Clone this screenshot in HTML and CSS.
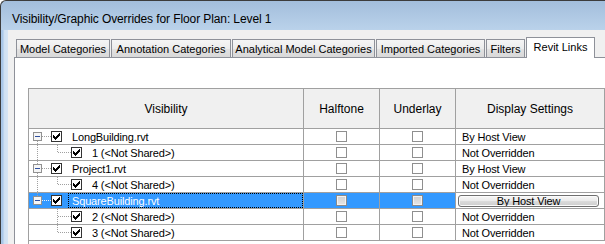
FILE: index.html
```html
<!DOCTYPE html>
<html lang="en">
<head>
  <meta charset="UTF-8" />
  <title>Visibility/Graphic Overrides for Floor Plan: Level 1</title>
  <link rel="stylesheet" href="styles.css">
</head>
<body>

  <div class="window">
    <div class="titlebar">Visibility/Graphic Overrides for Floor Plan: Level 1</div>

    <div class="frame">
      <div class="frame-edge"></div>

      <div class="client">
        <div class="tabs">
          <div class="tab tab-model">Model Categories</div>
          <div class="tab tab-annotation">Annotation Categories</div>
          <div class="tab tab-analytical">Analytical Model Categories</div>
          <div class="tab tab-imported">Imported Categories</div>
          <div class="tab tab-filters">Filters</div>
          <div class="tab tab-links active">Revit Links</div>
        </div>

        <div class="panel">
          <div class="grid">
            <div class="row head">
              <div class="cell">Visibility</div>
              <div class="cell">Halftone</div>
              <div class="cell">Underlay</div>
              <div class="cell">Display Settings</div>
            </div>

            <!-- LongBuilding.rvt -->
            <div class="row">
              <div class="cell vis">
                <svg class="tree" width="22" height="15">
                  <line class="dots" x1="8.5" y1="12" x2="8.5" y2="15" />
                  <line class="dots" x1="13" y1="7.5" x2="22" y2="7.5" />
                  <rect class="expander" x="4.5" y="3.5" width="8" height="8" />
                  <rect class="minus" x="6" y="7" width="5" height="1" />
                </svg>
                <span class="box on"><svg width="7" height="7"><path d="M6 0h1v1h-1zM5 1h2v1h-2zM0 2h1v1h-1zM4 2h3v1h-3zM0 3h2v1h-2zM3 3h3v1h-3zM0 4h5v1h-5zM1 5h3v1h-3zM2 6h1v1h-1z" /></svg></span>
                <span class="label">LongBuilding.rvt</span>
              </div>
              <div class="cell mid"><span class="box"></span></div>
              <div class="cell mid"><span class="box"></span></div>
              <div class="cell disp">By Host View</div>
            </div>

            <div class="row">
              <div class="cell vis">
                <svg class="tree" width="42" height="15">
                  <line class="dots" x1="8.5" y1="0" x2="8.5" y2="15" />
                  <line class="dots" x1="28.5" y1="0" x2="28.5" y2="8" />
                  <line class="dots" x1="29" y1="7.5" x2="42" y2="7.5" />
                </svg>
                <span class="box on"><svg width="7" height="7"><path d="M6 0h1v1h-1zM5 1h2v1h-2zM0 2h1v1h-1zM4 2h3v1h-3zM0 3h2v1h-2zM3 3h3v1h-3zM0 4h5v1h-5zM1 5h3v1h-3zM2 6h1v1h-1z" /></svg></span>
                <span class="label">1 (&lt;Not Shared&gt;)</span>
              </div>
              <div class="cell mid"><span class="box"></span></div>
              <div class="cell mid"><span class="box"></span></div>
              <div class="cell disp">Not Overridden</div>
            </div>

            <!-- Project1.rvt -->
            <div class="row">
              <div class="cell vis">
                <svg class="tree" width="22" height="15">
                  <line class="dots" x1="8.5" y1="0" x2="8.5" y2="3" />
                  <line class="dots" x1="8.5" y1="12" x2="8.5" y2="15" />
                  <line class="dots" x1="13" y1="7.5" x2="22" y2="7.5" />
                  <rect class="expander" x="4.5" y="3.5" width="8" height="8" />
                  <rect class="minus" x="6" y="7" width="5" height="1" />
                </svg>
                <span class="box on"><svg width="7" height="7"><path d="M6 0h1v1h-1zM5 1h2v1h-2zM0 2h1v1h-1zM4 2h3v1h-3zM0 3h2v1h-2zM3 3h3v1h-3zM0 4h5v1h-5zM1 5h3v1h-3zM2 6h1v1h-1z" /></svg></span>
                <span class="label">Project1.rvt</span>
              </div>
              <div class="cell mid"><span class="box"></span></div>
              <div class="cell mid"><span class="box"></span></div>
              <div class="cell disp">By Host View</div>
            </div>

            <div class="row">
              <div class="cell vis">
                <svg class="tree" width="42" height="15">
                  <line class="dots" x1="8.5" y1="0" x2="8.5" y2="15" />
                  <line class="dots" x1="28.5" y1="0" x2="28.5" y2="8" />
                  <line class="dots" x1="29" y1="7.5" x2="42" y2="7.5" />
                </svg>
                <span class="box on"><svg width="7" height="7"><path d="M6 0h1v1h-1zM5 1h2v1h-2zM0 2h1v1h-1zM4 2h3v1h-3zM0 3h2v1h-2zM3 3h3v1h-3zM0 4h5v1h-5zM1 5h3v1h-3zM2 6h1v1h-1z" /></svg></span>
                <span class="label">4 (&lt;Not Shared&gt;)</span>
              </div>
              <div class="cell mid"><span class="box"></span></div>
              <div class="cell mid"><span class="box"></span></div>
              <div class="cell disp">Not Overridden</div>
            </div>

            <!-- SquareBuilding.rvt (selected) -->
            <div class="row selected">
              <div class="cell vis">
                <svg class="tree" width="22" height="15">
                  <line class="dots" x1="8.5" y1="0" x2="8.5" y2="3" />
                  <line class="dots light" x1="13" y1="7.5" x2="22" y2="7.5" />
                  <rect class="expander" x="4.5" y="3.5" width="8" height="8" />
                  <rect class="minus" x="6" y="7" width="5" height="1" />
                </svg>
                <span class="box on"><svg width="7" height="7"><path d="M6 0h1v1h-1zM5 1h2v1h-2zM0 2h1v1h-1zM4 2h3v1h-3zM0 3h2v1h-2zM3 3h3v1h-3zM0 4h5v1h-5zM1 5h3v1h-3zM2 6h1v1h-1z" /></svg></span>
                <span class="label">SquareBuilding.rvt</span>
              </div>
              <div class="cell mid"><span class="box off"></span></div>
              <div class="cell mid"><span class="box off"></span></div>
              <div class="cell disp"><span class="button">By Host View</span></div>
            </div>

            <div class="row">
              <div class="cell vis">
                <svg class="tree" width="42" height="15">
                  <line class="dots" x1="28.5" y1="0" x2="28.5" y2="15" />
                  <line class="dots" x1="29" y1="7.5" x2="42" y2="7.5" />
                </svg>
                <span class="box on"><svg width="7" height="7"><path d="M6 0h1v1h-1zM5 1h2v1h-2zM0 2h1v1h-1zM4 2h3v1h-3zM0 3h2v1h-2zM3 3h3v1h-3zM0 4h5v1h-5zM1 5h3v1h-3zM2 6h1v1h-1z" /></svg></span>
                <span class="label">2 (&lt;Not Shared&gt;)</span>
              </div>
              <div class="cell mid"><span class="box"></span></div>
              <div class="cell mid"><span class="box"></span></div>
              <div class="cell disp">Not Overridden</div>
            </div>

            <div class="row">
              <div class="cell vis">
                <svg class="tree" width="42" height="15">
                  <line class="dots" x1="28.5" y1="0" x2="28.5" y2="8" />
                  <line class="dots" x1="29" y1="7.5" x2="42" y2="7.5" />
                </svg>
                <span class="box on"><svg width="7" height="7"><path d="M6 0h1v1h-1zM5 1h2v1h-2zM0 2h1v1h-1zM4 2h3v1h-3zM0 3h2v1h-2zM3 3h3v1h-3zM0 4h5v1h-5zM1 5h3v1h-3zM2 6h1v1h-1z" /></svg></span>
                <span class="label">3 (&lt;Not Shared&gt;)</span>
              </div>
              <div class="cell mid"><span class="box"></span></div>
              <div class="cell mid"><span class="box"></span></div>
              <div class="cell disp">Not Overridden</div>
            </div>
          </div>
        </div>
      </div>
    </div>
  </div>

</body>
</html>
```

FILE: styles.css
```css
* {
  box-sizing: border-box;
  margin: 0;
  padding: 0;
}

body {
  background: #fff;
  overflow: hidden;
  font-family: 'Liberation Sans', Arial, sans-serif;
  font-size: 11px;
  color: #000;
}

.window {
  width: 605px;
  height: 244px;
  overflow: hidden;
  border-top: 1px solid #3c3c3c;
  border-left: 1px solid #3c3c3c;
  border-top-left-radius: 6px;
  background: linear-gradient(#a3bedc, #bad2ea 29px);
  display: flex;
  flex-direction: column;
}

.titlebar {
  flex: none;
  height: 29px;
  padding: 11px 0 0 11px;
  font-size: 12px;
  line-height: 14px;
  letter-spacing: -0.1px;
}

.frame {
  flex: 1;
  display: flex;
  min-height: 0;
}

.frame-edge {
  width: 7px;
  background: linear-gradient(to right, #a9c7e8 0, #a9c7e8 2px, #cfe0f2 3px, #d6e5f4);
}

.client {
  flex: 1;
  min-width: 0;
  background: #f0f0f0;
  display: flex;
  flex-direction: column;
}

/* tab strip */
.tabs {
  flex: none;
  height: 27px;
  padding-left: 8px;
  display: flex;
  align-items: flex-end;
  gap: 1px;
}

.tab {
  flex: none;
  height: 18px;
  padding-top: 2px;
  line-height: 15px;
  text-align: center;
  white-space: nowrap;
  border: 1px solid #8e9199;
  border-bottom: none;
  background: linear-gradient(#f5f5f5, #ececec 50%, #e2e2e2 51%, #d9d9d9);
}

.tab-model { width: 94px; }
.tab-annotation { width: 120px; }
.tab-analytical { width: 143px; }
.tab-imported { width: 109px; }
.tab-filters { width: 39px; }

.tab.active {
  width: 69px;
  height: 21px;
  margin-bottom: -1px;
  background: #fff;
  position: relative;
  z-index: 1;
}

/* tab page */
.panel {
  flex: 1;
  min-height: 0;
  margin-left: 6px;
  padding: 30px 0 0 13px;
  background: #fff;
  border-top: 1px solid #8e9199;
  border-left: 1px solid #8e9199;
  display: flex;
  flex-direction: column;
  overflow: hidden;
}

.grid {
  flex: 1;
  border-top: 1px solid #a0a0a0;
  border-left: 1px solid #a0a0a0;
}

.row {
  display: grid;
  grid-template-columns: 275px 76px 76px 149px;
  height: 16px;
  letter-spacing: -0.15px;
}

.cell {
  display: flex;
  align-items: center;
  border-right: 1px solid #a0a0a0;
  border-bottom: 1px solid #a0a0a0;
  white-space: nowrap;
  overflow: hidden;
}

.row.head {
  height: 40px;
  letter-spacing: 0;
}

.head .cell {
  justify-content: center;
  background: #f0f0f0;
  font-size: 12px;
}

.mid {
  justify-content: center;
}

.disp {
  padding-left: 6px;
}

/* tree column */
.tree {
  display: block;
  flex: none;
  shape-rendering: crispEdges;
}

.dots {
  stroke: #a0a0a0;
  stroke-width: 1;
  stroke-dasharray: 1 1;
}

.dots.light {
  stroke: #e8f2ff;
}

.expander {
  fill: #f6f6f6;
  stroke: #919191;
}

.minus {
  fill: #2e4f9e;
}

.box {
  width: 11px;
  height: 11px;
  flex: none;
  border: 1px solid #8f8f8f;
  background: #fff;
  display: flex;
  align-items: center;
  justify-content: center;
}

.box.on {
  border-color: #333;
}

.box.on svg {
  display: block;
  shape-rendering: crispEdges;
  fill: #000;
}

.box.off {
  border-color: #8a8a8a;
  background: linear-gradient(#d0d0d0, #e6e6e6);
  box-shadow: inset 0 0 0 1px #f2f2f2;
}

.label {
  align-self: stretch;
  flex: 1;
  margin-left: 6px;
  padding-left: 3px;
  border: 1px solid transparent;
  display: flex;
  align-items: center;
}

/* selected row */
.selected .vis,
.selected .mid {
  background: #3399ff;
}

.selected .label {
  color: #fff;
  border: 1px dotted #000;
}

.selected .disp {
  padding: 1px 5px 1px 2px;
}

.button {
  flex: 1;
  height: 12px;
  line-height: 10px;
  overflow: hidden;
  text-align: center;
  border: 1px solid #6f6f6f;
  border-radius: 3px;
  background: linear-gradient(#f6f6f6, #ebebeb 50%, #dcdcdc 51%, #cdcdcd);
  box-shadow: inset 0 0 0 1px #fbfbfb;
}
```
